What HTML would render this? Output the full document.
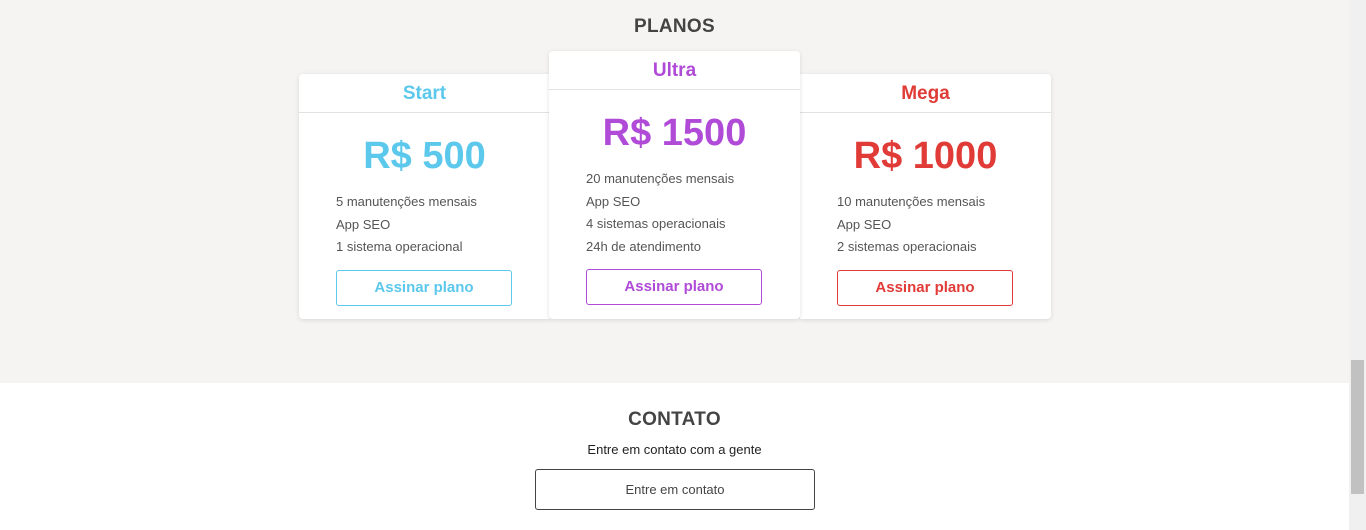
<!DOCTYPE html>
<html><head><meta charset="utf-8"><style>
*{margin:0;padding:0;box-sizing:border-box}
body{width:1366px;height:530px;overflow:hidden;background:#fff;font-family:"Liberation Sans",sans-serif;position:relative}
.top{position:absolute;left:0;top:0;width:1349px;height:383px;background:#f5f4f2}
.h{position:absolute;left:0;width:1349px;text-align:center;font-weight:bold;font-size:19px;color:#444;letter-spacing:0.3px}
.card{position:absolute;width:251px;background:#fff;border-radius:4px;box-shadow:0 1px 5px rgba(0,0,0,0.12)}
.card .t{height:39px;border-bottom:1px solid #e2e2e2;text-align:center;font-weight:bold;font-size:19px;line-height:40px}
.card .p{text-align:center;font-weight:bold;font-size:38px;line-height:44px;margin-top:21px}
.card ul{list-style:none;margin:13px 0 0 37px;font-size:13px;color:#555;line-height:22.6px}
.card .b{margin:11px 0 13px 37px;width:176px;height:36px;border:1px solid;border-radius:3px;text-align:center;font-weight:bold;font-size:15px;line-height:34px}
.sb{position:absolute;left:1349px;top:0;width:17px;height:530px;background:#f0f0f0}
.th{position:absolute;left:1351px;top:360px;width:13px;height:134px;background:#c1c1c1}
</style></head><body>
<div class="top"></div>
<div class="h" style="top:16px">PLANOS</div>

<div class="card" style="left:299px;top:74px;height:245px;border-radius:4px 0 0 4px">
<div class="t" style="color:#5bc8ec">Start</div>
<div class="p" style="color:#5bc8ec">R$ 500</div>
<ul><li>5 manutenções mensais</li><li>App SEO</li><li>1 sistema operacional</li></ul>
<div class="b" style="color:#5bc8ec;border-color:#5bc8ec">Assinar plano</div>
</div>

<div class="card" style="left:800px;top:74px;height:245px;border-radius:0 4px 4px 0">
<div class="t" style="color:#e03b37">Mega</div>
<div class="p" style="color:#e03b37">R$ 1000</div>
<ul><li>10 manutenções mensais</li><li>App SEO</li><li>2 sistemas operacionais</li></ul>
<div class="b" style="color:#e03b37;border-color:#e03b37">Assinar plano</div>
</div>

<div class="card" style="left:549px;top:51px;height:268px;z-index:2">
<div class="t" style="color:#b04bd8">Ultra</div>
<div class="p" style="color:#b04bd8">R$ 1500</div>
<ul><li>20 manutenções mensais</li><li>App SEO</li><li>4 sistemas operacionais</li><li>24h de atendimento</li></ul>
<div class="b" style="color:#b04bd8;border-color:#b04bd8">Assinar plano</div>
</div>

<div class="h" style="top:409px">CONTATO</div>
<div style="position:absolute;left:0;width:1349px;top:442px;text-align:center;font-size:13px;color:#222">Entre em contato com a gente</div>
<div style="position:absolute;left:535px;top:469px;width:280px;height:41px;border:1px solid #444;border-radius:3px;text-align:center;font-size:13px;color:#444;line-height:39px">Entre em contato</div>

<div class="sb"></div><div class="th"></div>
</body></html>
